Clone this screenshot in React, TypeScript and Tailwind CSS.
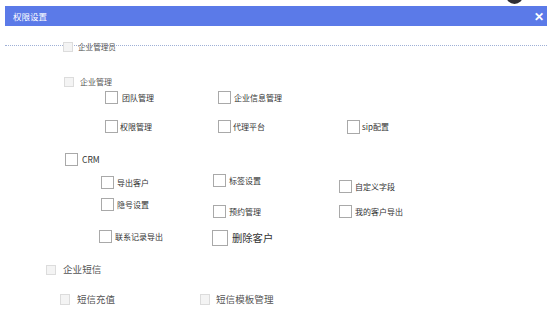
import React from 'react';

type CbProps = {
  label: string;
  box?: string;
  gap?: string;
  text?: string;
  light?: boolean;
  className?: string;
};

const Cb: React.FC<CbProps> = ({ label, box = 'w-[13px] h-[13px]', gap = 'ml-[3px]', text = 'text-[8px]', light, className = '' }) => {
  return (
    <div className={`flex items-center ${className}`}>
      <span
        className={`${box} shrink-0 border ${light ? 'border-[#dcdcdc] bg-[#f4f4f4]' : 'border-[#a9a9a9] bg-white'}`}
      ></span>
      <span className={`${gap} ${text} leading-none whitespace-nowrap ${light ? 'text-[#555]' : 'text-[#333]'}`}>{label}</span>
    </div>
  );
};

const App: React.FC = () => {
  return (
    <div
      className="relative w-[547px] h-[317px] overflow-hidden bg-white"
      style={{ fontFamily: '"Noto Sans CJK SC", "Noto Sans", sans-serif' }}
    >
      {/* dark knob peeking in at the top */}
      <div className="absolute left-[506px] top-[-13px] w-[17px] h-[17px] rounded-full bg-[#2f2f35]"></div>

      {/* header */}
      <div className="mt-[6px] ml-[5px] h-[20px] bg-[#5b7ae8] flex items-center justify-between pl-[8px] pr-[3px]">
        <span className="text-[8.5px] text-white leading-none">权限设置</span>
        <span className="text-white text-[12px] leading-none font-bold">✕</span>
      </div>

      {/* 企业管理员, sitting on the dashed rule */}
      <div className="relative mt-[16px] h-[10px] flex pl-[63px]">
        <div className="absolute left-[5px] right-0 top-[3px] border-t border-dotted border-[#9fb0d6]"></div>
        <Cb label="企业管理员" light box="w-[10px] h-[10px]" gap="ml-[5px]" text="text-[7.6px]" className="relative" />
      </div>

      {/* 企业管理 */}
      <div className="mt-[25px] h-[10px] flex pl-[64px]">
        <Cb label="企业管理" light box="w-[10px] h-[10px]" gap="ml-[6px]" text="text-[8px]" />
      </div>

      <div className="mt-[4px] h-[13px] flex pl-[105px]">
        <Cb label="团队管理" gap="ml-[4px]" className="w-[113px]" />
        <Cb label="企业信息管理" />
      </div>

      <div className="mt-[16px] h-[14px] flex items-start pl-[105px]">
        <Cb label="权限管理" gap="ml-[2px]" className="w-[113px]" />
        <Cb label="代理平台" gap="ml-[2px]" className="w-[129px]" />
        <Cb label="sip配置" gap="ml-[2px]" box="w-[13px] h-[14px]" />
      </div>

      {/* CRM */}
      <div className="mt-[19px] h-[13px] flex pl-[65px]">
        <Cb label="CRM" gap="ml-[4px]" text="text-[8.5px]" />
      </div>

      <div className="mt-[8px] h-[19px] flex items-start pl-[101px]">
        <Cb label="导出客户" className="w-[112px] mt-[2px]" />
        <Cb label="标签设置" className="w-[126px]" />
        <Cb label="自定义字段" className="mt-[6px]" />
      </div>

      <div className="mt-[5px] h-[20px] flex items-start pl-[101px]">
        <Cb label="隐号设置" className="w-[112px]" />
        <Cb label="预约管理" className="w-[126px] mt-[7px]" />
        <Cb label="我的客户导出" className="mt-[7px]" />
      </div>

      <div className="mt-[12px] h-[16px] flex items-start pl-[99px]">
        <Cb label="联系记录导出" className="w-[113px]" />
        <Cb label="删除客户" box="w-[16px] h-[16px]" gap="ml-[4px]" text="text-[10.3px]" />
      </div>

      {/* 企业短信 */}
      <div className="mt-[19px] h-[10px] flex pl-[46px]">
        <Cb label="企业短信" light box="w-[10px] h-[10px]" gap="ml-[7px]" text="text-[9.6px]" />
      </div>

      <div className="mt-[19px] h-[11px] flex pl-[60px]">
        <Cb label="短信充值" light box="w-[10px] h-[11px]" gap="ml-[7px]" text="text-[9.5px]" className="w-[140px]" />
        <Cb label="短信模板管理" light box="w-[10px] h-[11px]" gap="ml-[6px]" text="text-[9.6px]" />
      </div>
    </div>
  );
};

export default App;
